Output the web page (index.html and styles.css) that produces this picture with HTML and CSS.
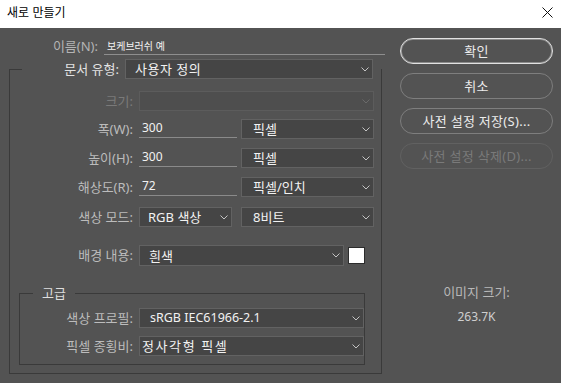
FILE: index.html
```
<!DOCTYPE html>
<html lang="ko">
<head>
<meta charset="utf-8">
<title>새로 만들기</title>
<link rel="stylesheet" href="styles.css">
</head>
<body>
<div class="window">
  <header class="titlebar">
    <span class="title">새로 만들기</span>
    <svg class="close" width="11" height="11" viewBox="0 0 11 11"><path d="M0.5 0.5 L10.5 10.5 M10.5 0.5 L0.5 10.5" stroke="#111" stroke-width="1" fill="none"/></svg>
  </header>
  <main class="body">
    <section class="form">
      <div class="name-row">
        <span class="lbl name-lbl">이름(N):</span>
        <div class="name-input">보케브러쉬 예</div>
      </div>
      <fieldset class="group">
        <legend class="doc-legend">
          <span class="doc-lbl">문서 유형:</span>
          <div class="select doc-select"><span>사용자 정의</span><svg class="chev" width="8" height="5" viewBox="0 0 8 5"><path d="M0.5 0.5 L4 4 L7.5 0.5" fill="none" stroke="#c4c4c4"/></svg></div>
        </legend>

        <div class="row">
          <span class="lbl off">크기:</span>
          <div class="controls">
            <div class="select off w-full"><span></span><svg class="chev" width="8" height="5" viewBox="0 0 8 5"><path d="M0.5 0.5 L4 4 L7.5 0.5" fill="none" stroke="#6a6a6a"/></svg></div>
          </div>
        </div>

        <div class="row r-w">
          <span class="lbl">폭(W):</span>
          <div class="controls">
            <div class="input">300</div>
            <div class="select w-unit"><span>픽셀</span><svg class="chev" width="8" height="5" viewBox="0 0 8 5"><path d="M0.5 0.5 L4 4 L7.5 0.5" fill="none" stroke="#c4c4c4"/></svg></div>
          </div>
        </div>

        <div class="row r-h">
          <span class="lbl">높이(H):</span>
          <div class="controls">
            <div class="input">300</div>
            <div class="select w-unit"><span>픽셀</span><svg class="chev" width="8" height="5" viewBox="0 0 8 5"><path d="M0.5 0.5 L4 4 L7.5 0.5" fill="none" stroke="#c4c4c4"/></svg></div>
          </div>
        </div>

        <div class="row r-r">
          <span class="lbl">해상도(R):</span>
          <div class="controls">
            <div class="input">72</div>
            <div class="select w-unit"><span>픽셀/인치</span><svg class="chev" width="8" height="5" viewBox="0 0 8 5"><path d="M0.5 0.5 L4 4 L7.5 0.5" fill="none" stroke="#c4c4c4"/></svg></div>
          </div>
        </div>

        <div class="row r-m">
          <span class="lbl">색상 모드:</span>
          <div class="controls">
            <div class="select w-mode"><span>RGB 색상</span><svg class="chev" width="8" height="5" viewBox="0 0 8 5"><path d="M0.5 0.5 L4 4 L7.5 0.5" fill="none" stroke="#c4c4c4"/></svg></div>
            <div class="select w-unit"><span>8비트</span><svg class="chev" width="8" height="5" viewBox="0 0 8 5"><path d="M0.5 0.5 L4 4 L7.5 0.5" fill="none" stroke="#c4c4c4"/></svg></div>
          </div>
        </div>

        <div class="row r-bg">
          <span class="lbl">배경 내용:</span>
          <div class="controls bg-controls">
            <div class="select w-bg"><span>흰색</span><svg class="chev" width="8" height="5" viewBox="0 0 8 5"><path d="M0.5 0.5 L4 4 L7.5 0.5" fill="none" stroke="#c4c4c4"/></svg></div>
            <div class="swatch"></div>
          </div>
        </div>

        <fieldset class="adv">
          <legend class="adv-legend">고급</legend>
          <div class="row">
            <span class="lbl lbl-adv">색상 프로필:</span>
            <div class="select w-adv latin"><span>sRGB IEC61966-2.1</span><svg class="chev" width="8" height="5" viewBox="0 0 8 5"><path d="M0.5 0.5 L4 4 L7.5 0.5" fill="none" stroke="#c4c4c4"/></svg></div>
          </div>
          <div class="row r-asp">
            <span class="lbl lbl-adv">픽셀 종횡비:</span>
            <div class="select w-adv tight"><span>정사각형 픽셀</span><svg class="chev" width="8" height="5" viewBox="0 0 8 5"><path d="M0.5 0.5 L4 4 L7.5 0.5" fill="none" stroke="#c4c4c4"/></svg></div>
          </div>
        </fieldset>
      </fieldset>
    </section>

    <aside class="side">
      <button class="btn ok">확인</button>
      <button class="btn">취소</button>
      <button class="btn">사전 설정 저장(S)...</button>
      <button class="btn dis">사전 설정 삭제(D)...</button>
      <div class="info">
        <div class="info-lbl">이미지 크기:</div>
        <div class="info-val">263.7K</div>
      </div>
    </aside>
  </main>
</div>
</body>
</html>
```

FILE: styles.css
```
* { box-sizing: border-box; }

html, body {
  margin: 0;
  padding: 0;
}

body {
  background: #535353;
  font-family: "Noto Sans", "Noto Sans CJK KR", sans-serif;
  font-size: 13px;
  color: #ececec;
}

.window {
  width: 561px;
  height: 383px;
  display: flex;
  flex-direction: column;
}

.titlebar {
  height: 28px;
  flex: none;
  background: #ffffff;
  display: flex;
  align-items: center;
  justify-content: space-between;
  padding: 0 8px 4px 7px;
}

.title {
  font-family: "Noto Sans CJK KR", sans-serif;
  font-size: 12px;
  line-height: 16px;
  color: #000;
}

.close {
  display: block;
}

.body {
  flex: 1;
  display: flex;
  padding: 10px 0 0 9px;
}

.form {
  width: 376px;
  flex: none;
}

.name-row {
  display: flex;
  height: 17px;
}

.lbl {
  width: 123px;
  flex: none;
  text-align: right;
  margin-right: 6px;
  color: #bcbcbc;
  line-height: 20px;
  white-space: nowrap;
}

.name-lbl {
  width: 89px;
  line-height: 17px;
  color: #b4b4b4;
}

.name-input {
  width: 281px;
  height: 17px;
  border-bottom: 1px solid #8e8e8e;
  padding-left: 3px;
  font-size: 10px;
  line-height: 16px;
  color: #f4f4f4;
  font-family: "Noto Sans CJK KR", sans-serif;
}

.group {
  margin: 4px 0 0 0;
  width: 373px;
  min-width: 0;
  border: 1px solid #3a3a3a;
  padding: 12px 0 8px 0;
}

.doc-legend {
  display: flex;
  align-items: center;
  margin-left: 12px;
  padding: 0 8px 0 0;
}

.doc-lbl {
  width: 97px;
  text-align: right;
  margin-right: 6px;
  color: #e2e2e2;
  line-height: 20px;
  white-space: nowrap;
}

.select {
  height: 20px;
  display: flex;
  align-items: center;
  justify-content: space-between;
  background: #454545;
  border: 1px solid #626262;
  padding: 0 3px 0 10px;
  color: #f2f2f2;
  white-space: nowrap;
  line-height: 18px;
}

.chev {
  display: block;
  flex: none;
}

.doc-select { width: 248px; padding-left: 9px; letter-spacing: 0.5px; }

.select.off {
  background: #4e4e4e;
  border-color: #5c5c5c;
}

.lbl.off { color: #7a7a7a; }

.row {
  display: flex;
  align-items: flex-start;
  height: 20px;
}

.r-w { margin-top: 8px; }
.r-h { margin-top: 9px; }
.r-r { margin-top: 9px; }
.r-m { margin-top: 10px; }
.r-bg { margin-top: 18px; height: 21px; }
.r-bg .select { height: 21px; }

.controls {
  width: 235px;
  display: flex;
  justify-content: space-between;
  align-items: flex-start;
}

.bg-controls {
  width: 226px;
  align-items: center;
  height: 21px;
}

.w-full { width: 235px; }
.w-unit { width: 133px; padding-left: 11px; }
.w-mode { width: 93px; padding-left: 8px; }
.w-bg { width: 205px; padding-left: 9px; }

.input {
  width: 98px;
  height: 19px;
  border-bottom: 1px solid #8a8a8a;
  padding-left: 3px;
  font-size: 12px;
  line-height: 18px;
  color: #f2f2f2;
}

.swatch {
  width: 17px;
  height: 17px;
  background: #ffffff;
  border: 1px solid #2c2c2c;
}

.adv {
  margin: 19px 16px 0 9px;
  min-width: 0;
  border: 1px solid #3a3a3a;
  padding: 7px 0 8px 0;
}

.adv-legend {
  margin-left: 13px;
  padding: 0 9px;
  line-height: 16px;
  color: #dedede;
}

.lbl-adv { width: 113px; }

.r-asp { margin-top: 8px; }

.w-adv { width: 225px; }
.latin { font-size: 12.5px; }
.tight { padding-left: 2px; letter-spacing: 1.6px; }

.side {
  width: 153px;
  flex: none;
  margin-left: 15px;
  display: flex;
  flex-direction: column;
  gap: 9px;
}

.btn {
  display: block;
  width: 153px;
  height: 26px;
  border-radius: 13px;
  border: 1px solid #7e7e7e;
  background: transparent;
  color: #ececec;
  font-family: "Noto Sans", "Noto Sans CJK KR", sans-serif;
  font-size: 13px;
  line-height: 18px;
  letter-spacing: 0.3px;
  padding: 0;
  text-align: center;
}

.btn.ok {
  border-color: #e2e2e2;
  box-shadow: inset 0 0 0 1px rgba(210, 210, 210, 0.45);
}

.btn.dis {
  border-color: #616161;
  color: #7a7a7a;
}

.info {
  margin-top: 106px;
  text-align: center;
}

.info-lbl {
  color: #b8b8b8;
  line-height: 16px;
}

.info-val {
  margin-top: 9px;
  font-size: 12px;
  line-height: 16px;
  color: #cfcfcf;
}
```
